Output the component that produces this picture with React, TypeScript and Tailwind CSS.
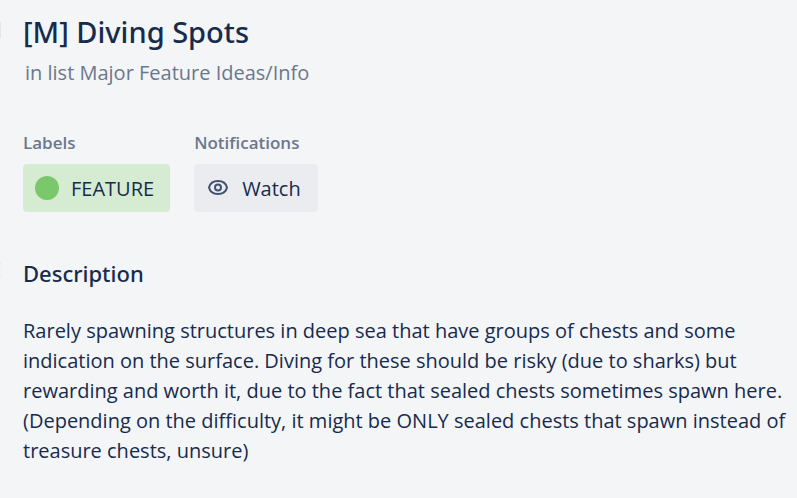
import React from "react";

const EyeIcon: React.FC = () => (
  <svg className="h-6 w-6" viewBox="0 0 24 24" fill="none" stroke="currentColor" strokeWidth="2" aria-hidden="true">
    <path d="M3 11.5C4 7.4 7.6 5 12 5S20 7.4 21 11.5C20 15.6 16.4 18 12 18S4 15.6 3 11.5Z" />
    <circle cx="12" cy="11.5" r="3" />
  </svg>
);

const App: React.FC = () => (
  <div className="flex min-h-screen bg-[#f4f5f7] font-['Open_Sans',sans-serif] text-[#172b4d]">
    <div className="flex w-px shrink-0 flex-col">
      <span className="mt-[22px] h-4 bg-[#e3e5e9]"></span>
      <span className="mt-[225px] h-px bg-[#e3e5e9]"></span>
      <span className="mt-[5px] h-px bg-[#e3e5e9]"></span>
      <span className="mt-[5px] h-px bg-[#e3e5e9]"></span>
    </div>
    <main className="flex-1 pr-2 pl-[22px]">
      <header className="pt-3">
        <h1 className="font-['Noto_Sans',sans-serif] text-[29px] leading-10 font-medium">[M] Diving Spots</h1>
        <p className="mt-1 pl-[2px] text-[20px] leading-[34px] text-[#6b778c]">in list Major Feature Ideas/Info</p>
      </header>
      <div className="mt-10 flex gap-6">
        <section>
          <h2 className="mb-2 text-[17px] leading-[26px] font-semibold text-[#6b778c]">Labels</h2>
          <button type="button" className="flex h-12 items-center rounded-sm bg-[#d6ecd2] pt-[2px] pr-4 pl-3 text-[20px]">
            <span className="mr-3 mb-[2px] h-6 w-6 rounded-full bg-[#7bc86c]"></span>
            FEATURE
          </button>
        </section>
        <section>
          <h2 className="mb-2 text-[17px] leading-[26px] font-semibold text-[#6b778c]">Notifications</h2>
          <button type="button" className="flex h-12 items-center gap-3 rounded-sm bg-[#ebecf0] pt-[2px] pr-[17px] pl-3 text-[20px]">
            <span className="mb-[2px] text-[#42526e]"><EyeIcon /></span>
            Watch
          </button>
        </section>
      </div>
      <section className="mt-11">
        <h2 className="font-['Noto_Sans',sans-serif] text-[22px] leading-[34px] font-medium">Description</h2>
        <p className="mt-[26px] text-[20px] leading-[30px]">
          Rarely spawning structures in deep sea that have groups of chests and some indication on the surface. Diving
          for these should be risky (due to sharks) but rewarding and worth it, due to the fact that sealed chests
          sometimes spawn here. (Depending on the difficulty, it might be ONLY sealed chests that spawn instead of
          treasure chests, unsure)
        </p>
      </section>
    </main>
  </div>
);

export default App;
